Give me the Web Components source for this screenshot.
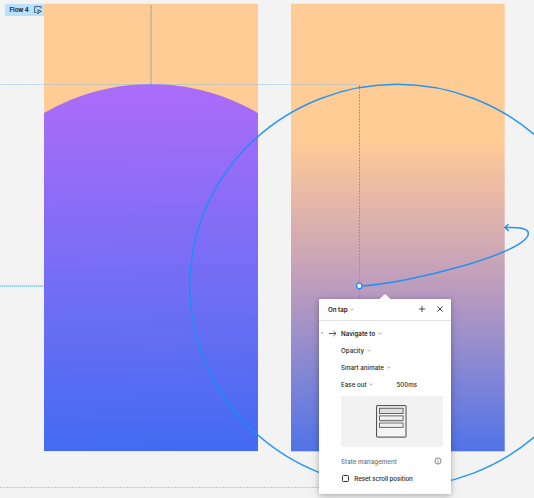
<!DOCTYPE html>
<html lang="en">
<head>
<meta charset="utf-8">
<title>Prototype canvas</title>
<style>
html,body{margin:0;height:100%;overflow:hidden;background:#f3f3f3;font-family:Inter,"Liberation Sans",sans-serif}
</style>
</head>
<body>
<proto-canvas>
  <flow-badge slot="badge">Flow 4</flow-badge>
  <interaction-panel slot="panel">
    <panel-header slot="header">On tap</panel-header>
    <option-row kind="main">Navigate to</option-row>
    <option-row>Opacity</option-row>
    <option-row>Smart animate</option-row>
    <option-row>Ease out<span slot="value">500ms</span></option-row>
    <animation-preview></animation-preview>
    <state-section><span slot="title">State management</span><check-option>Reset scroll position</check-option></state-section>
  </interaction-panel>
</proto-canvas>
<script>
const define = (name, html) => {
  const t = document.createElement('template');
  t.innerHTML = html;
  customElements.define(name, class extends HTMLElement {
    constructor() {
      super();
      this.attachShadow({mode: 'open'}).append(t.content.cloneNode(true));
    }
  });
};

define('chevron-icon', `<style>:host{display:block;width:4px;height:3px}svg{display:block}</style>
<svg width="4" height="3" viewBox="0 0 4 3" fill="none" stroke="#858585" stroke-width=".65"><path d="M.3 .7 2 2.2 3.7 .7"/></svg>`);

define('flow-badge', `<style>
:host{display:flex;box-sizing:border-box;align-items:center;width:39px;height:12px;padding-left:4.5px;background:#b9e0fd;border-radius:2px 0 0 2px;color:#1b2a38;font-size:6px;font-weight:700;line-height:12px;white-space:nowrap;gap:5px}
svg{flex:none}
</style><slot></slot>
<svg width="8" height="8" viewBox="0 0 8 8" fill="none" stroke="#2b3d4d" stroke-width=".8"><path d="M2.4 6.5H.6V.6H7.1V2.4M3.9 8V3.7L7.3 5.4 5.2 6.1Z"/></svg>`);

define('panel-header', `<style>
:host{display:flex;box-sizing:border-box;align-items:center;height:21.5px;padding:0 7px 0 9px;border-bottom:1px solid #e3e3e3;font-size:6.2px;font-weight:600;color:#222}
chevron-icon{margin-left:2.5px}.gap{flex:1}.close{margin-left:9.6px}svg{display:block}
</style><slot></slot><chevron-icon></chevron-icon><span class="gap"></span>
<svg width="8" height="8" viewBox="0 0 8 8" stroke="#333" stroke-width=".85"><path d="M4 .9V7.1M.9 4H7.1"/></svg>
<svg class="close" width="8" height="8" viewBox="0 0 8 8" stroke="#222" stroke-width=".85"><path d="M1.3 1.3 6.7 6.7M6.7 1.3 1.3 6.7"/></svg>`);

define('option-row', `<style>
:host{display:grid;grid-template-columns:22.1px 55.3px 1fr;align-items:center;height:17px;font-size:6.2px;font-weight:500;color:#252525;white-space:nowrap}
:host([kind=main]){font-weight:600;color:#1e1e1e}
.lead{display:block;visibility:hidden}:host([kind=main]) .lead{visibility:visible}
.label{display:flex;align-items:center;gap:2.8px}
</style>
<svg class="lead" width="21" height="9" viewBox="0 0 21 9" fill="none" stroke="#333" stroke-width=".8"><path d="M2 3.5H4.2L3.1 5.1Z" fill="#888" stroke="none"/><path d="M9.9 4.5H17M14.4 2 17 4.5 14.4 7"/></svg>
<span class="label"><slot></slot><chevron-icon></chevron-icon></span><slot name="value"></slot>`);

define('animation-preview', `<style>
:host{display:grid;place-items:center;margin:3px 8.3px 0 21.8px;height:51px;background:#f2f2f2}svg{display:block}
</style>
<svg width="31" height="33" viewBox="0 0 31 33" fill="none" stroke="#444" stroke-width=".8"><rect x=".6" y=".6" width="29.4" height="31.5" rx=".5" stroke-width="1" fill="#f5f5f5"/><g fill="#f2f2f2"><rect x="3.5" y="3.2" width="23.6" height="5.3" fill="#dedede"/><rect x="3.5" y="10.9" width="23.6" height="4.4"/><rect x="3.5" y="18" width="23.6" height="4.3"/></g><path d="M4 16.7H27" stroke="#c8c8c8" stroke-width="1.5"/></svg>`);

define('state-section', `<style>
:host{display:block;padding:6.4px 8.6px 0 22.1px}
.title{display:flex;align-items:center;justify-content:space-between;height:17px;font-size:6.2px;font-weight:500;color:#707070;white-space:nowrap}
</style>
<div class="title"><slot name="title"></slot><svg width="8" height="8" viewBox="0 0 8 8" fill="none" stroke="#555" stroke-width=".7"><circle cx="4" cy="4" r="3.1"/><path d="M4 3.6V5.8M4 2.2V2.9"/></svg></div><slot></slot>`);

define('check-option', `<style>
:host{display:flex;align-items:center;height:17px;padding-left:.9px;gap:5.3px;font-size:6.2px;font-weight:500;letter-spacing:-.05px;color:#252525;white-space:nowrap}
.box{box-sizing:border-box;width:7px;height:7px;border:1px solid #333;border-radius:1.5px}
</style><span class="box"></span><slot></slot>`);

define('interaction-panel', `<style>
:host{display:block;width:132px;height:195px;background:#fff;border-radius:1px;box-shadow:0 1px 5px rgba(0,0,0,.24),0 3px 12px rgba(0,0,0,.1)}
.tip{position:absolute;left:60px;top:-5px;display:block}
.body{padding-top:4px}
</style>
<svg class="tip" width="12" height="6" viewBox="0 0 12 6"><path d="M0 5.5 5 .8Q6 0 7 .8L12 5.5Z" fill="#fff"/></svg>
<slot name="header"></slot><div class="body"><slot></slot></div>`);

define('proto-canvas', `<style>
:host{display:block;position:relative;width:534px;height:498px;overflow:hidden;background:#f3f3f3}
.art{display:block}
::slotted(flow-badge){position:absolute;left:5px;top:4px}
::slotted(interaction-panel){position:absolute;left:319px;top:299px}
</style>
<svg class="art" width="534" height="498" viewBox="0 0 534 498" fill="none">
<defs>
<linearGradient id="sun" gradientUnits="userSpaceOnUse" x1="140" y1="84" x2="151" y2="487"><stop stop-color="#ab6cfa"/><stop offset=".09" stop-color="#a36cf8"/><stop offset=".56" stop-color="#6b6ef4"/><stop offset=".91" stop-color="#426bf1"/><stop offset="1" stop-color="#3a69f0"/></linearGradient>
<linearGradient id="sky" gradientUnits="userSpaceOnUse" x1="0" y1="4" x2="0" y2="451"><stop stop-color="#ffcc95"/><stop offset=".3" stop-color="#ffcc95"/><stop offset=".42" stop-color="#ebbaa5"/><stop offset=".65" stop-color="#b89ac0"/><stop offset="1" stop-color="#5073e8"/></linearGradient>
<clipPath id="frame"><rect x="44" y="4" width="214" height="447"/></clipPath>
</defs>
<rect x="44" y="3.7" width="214" height="447.6" fill="#ffcc95"/>
<g clip-path="url(#frame)"><ellipse cx="151" cy="285.8" rx="207.5" ry="201.7" fill="url(#sun)"/></g>
<rect x="291" y="3.7" width="213.7" height="447.6" fill="url(#sky)"/>
<path d="M0 84.5H359" stroke="#74baf0" stroke-opacity=".5" stroke-dasharray="2 .7"/>
<path d="M151 5V84" stroke="#8fc0c8" stroke-width="2" stroke-opacity=".4"/>
<path d="M151 5V84" stroke="#78b8d4" stroke-width="1.8" stroke-opacity=".7" stroke-dasharray="1 1"/>
<path d="M0 286H44" stroke="#9ccff5" stroke-width="2" stroke-opacity=".35"/>
<path d="M0 286H44" stroke="#8ac7f3" stroke-width="1.8" stroke-opacity=".8" stroke-dasharray="1 1"/>
<path d="M0 487.5H320" stroke="#8cc5f0" stroke-opacity=".75" stroke-dasharray="2 1"/>
<path d="M359.5 85V300" stroke="#55a3d8" stroke-opacity=".85" stroke-dasharray="2 1"/>
<ellipse cx="397.2" cy="285.8" rx="207.4" ry="201.5" stroke="#1690fa" stroke-width="1.5" stroke-opacity=".92"/>
<path d="M360 286C407 284 528 253 528.3 233.5C528.5 228 518 227 505 227.5M508.5 224.2 504.9 227.5 508.8 231" stroke="#2590f3" stroke-width="1.5"/>
<circle cx="359.3" cy="285.9" r="2.7" fill="#fff" stroke="#1690fa" stroke-width="1.3"/>
</svg>
<slot name="badge"></slot><slot name="panel"></slot>`);
</script>
</body>
</html>
